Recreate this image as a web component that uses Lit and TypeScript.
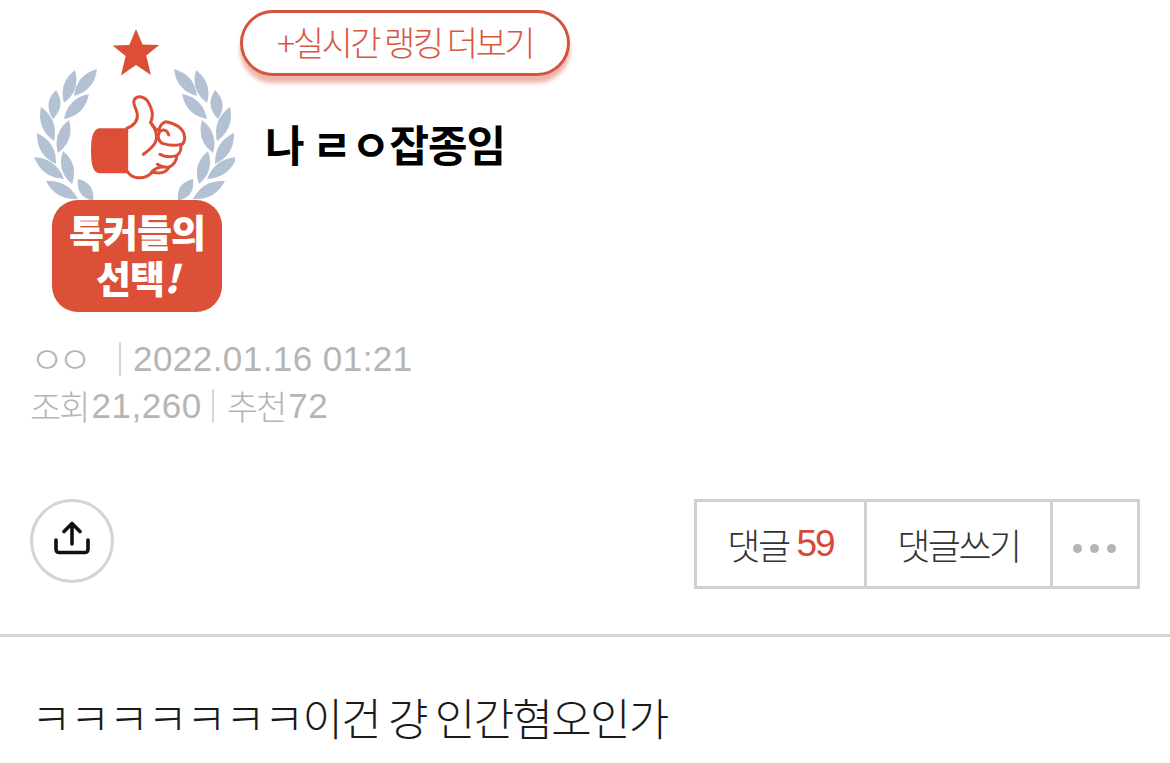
import { LitElement, html, css } from "lit";
import { customElement } from "lit/decorators.js";

const leaves: number[][] = [
  [97, 69, 74, 96], [75, 70, 64, 103], [89, 94, 64, 119], [56, 90, 53, 119], [41, 107, 54, 141],
  [69, 120, 58, 153], [37, 133, 56, 164], [63, 151, 72, 184], [34, 157, 64, 179], [46, 181, 78, 199], [78, 179, 93, 201],
];

function leaf(x1: number, y1: number, x2: number, y2: number, w = 12) {
  const dx = x2 - x1, dy = y2 - y1, l = Math.hypot(dx, dy);
  const nx = -dy / l * w, ny = dx / l * w;
  const mx = (x1 + x2) / 2, my = (y1 + y2) / 2;
  return `M${x1} ${y1}Q${mx + nx} ${my + ny} ${x2} ${y2}Q${mx - nx} ${my - ny} ${x1} ${y1}Z`;
}
const leafPath = leaves.map((p) => leaf(p[0], p[1], p[2], p[3]) + leaf(271 - p[0], p[1], 271 - p[2], p[3])).join("");

@customElement("app-root")
export class AppRoot extends LitElement {
  static styles = css`
    :host { display: block; width: 1170px; height: 763px; overflow: hidden; background: #fff;
      font-family: "Liberation Sans", "Noto Sans CJK KR", sans-serif; }
    .top { display: flex; padding: 10px 30px 0; height: 310px; box-sizing: border-box; }
    .badge { width: 205px; height: 295px; margin-top: 10px; flex: none; display: block; }
    .badge text { font-family: "Noto Sans CJK KR", sans-serif; font-weight: 900; fill: #fff; text-anchor: middle; }
    .head { margin-left: 5px; display: flex; flex-direction: column; align-items: flex-start; }
    .rank { box-sizing: border-box; width: 330px; height: 66px; border: 3px solid #d4553e; border-radius: 33px;
      box-shadow: 0 7px 4px 0 #efb5aa; display: flex; align-items: center; justify-content: center;
      color: #d8573f; font: 300 34px "Noto Sans CJK KR", sans-serif; letter-spacing: -2.5px; background: #fff; padding-bottom: 4px; }
    h1 { margin: 42px 0 0 25px; font: 700 43px/50px "Noto Sans CJK KR", sans-serif; color: #000; letter-spacing: -1px; white-space: pre; }
    .meta { padding: 25px 0 0 30px; color: #b5b5b5; font-size: 35px; line-height: 47px; }
    .line { display: flex; align-items: center; height: 47px; white-space: pre; }
    .ko { font-family: "Noto Sans CJK KR", sans-serif; letter-spacing: -2px; font-weight: 300; font-size: 34px; }
    .nick { width: 58px; letter-spacing: -6px; font-size: 37px; }
    .bar { width: 2px; height: 34px; background: #d8d8d8; flex: none; }
    .bar.a { margin: 0 12px 0 31px; }
    .bar.b { margin: 0 13px 0 10px; }
    .num { letter-spacing: 0.45px; }
    .num2 { letter-spacing: 0.5px; margin-left: 3px; }
    .actions { display: flex; justify-content: space-between; align-items: flex-start; padding: 0 30px; margin-top: 70px; height: 138px; box-sizing: border-box; border-bottom: 3px solid #d5d5d5; }
    .share { box-sizing: border-box; width: 84px; height: 84px; border: 3px solid #d4d4d4; border-radius: 50%; display: flex; align-items: center; justify-content: center; }
    .share svg { display: block; }
    .group { display: flex; height: 90px; box-sizing: border-box; border: 3px solid #d0d0d0; color: #333; font: 300 36px "Noto Sans CJK KR", sans-serif; letter-spacing: -2.5px; }
    .cell { display: flex; align-items: center; justify-content: center; box-sizing: border-box; border-right: 3px solid #d0d0d0; }
    .c1 { width: 170px; }
    .c2 { width: 186px; }
    .c3 { width: 84px; border-right: 0; gap: 8px; padding-top: 9px; padding-right: 2px; }
    .red { color: #d4493c; margin-left: 8px; font-family: "Liberation Sans", sans-serif; letter-spacing: -2px; font-size: 37px; }
    .dot { width: 9px; height: 9px; background: #b5b5b5; border-radius: 50%; }
    p { margin: 0; padding: 50px 0 0 31px; font: 300 44px/60px "Noto Sans CJK KR", sans-serif; color: #1a1a1a; letter-spacing: -1.7px; white-space: pre; }
  `;

  render() {
    return html`
      <div class="top">
        <svg class="badge" viewBox="30 20 205 295" aria-hidden="true">
          <path d="${leafPath}" fill="#b3c2d3"></path>
          <path d="M136 29l6.6 15.5 16.7.6-13 10.4 4.6 19.5L136 65l-15 10.5 4.6-19.5-13-10.4 16.7-.6z" fill="#dc4f36"></path>
          <g transform="translate(80 85) scale(.3333)">
            <path d="M62 130h82v135H62c-18 0-29-14-29-67s11-68 29-68z" fill="#dc4f36"></path>
            <path d="M140 130C160 122 174 108 172 88C170 70 156 56 163 44C172 30 195 34 205 52C218 74 222 92 212 112C218 124 226 132 236 136C240 122 246 112 258 110C284 114 312 130 314 156C315 168 310 176 302 182C305 194 298 206 290 212C292 226 280 240 268 246C262 256 250 264 236 264L216 262C206 274 190 280 172 278C156 276 146 268 140 256Z" fill="#fff" stroke="#dc4f36" stroke-width="9" stroke-linejoin="round"></path>
            <path d="M212 112C226 130 236 150 226 172C218 188 204 198 190 208M266 150C262 134 246 130 238 142C232 154 234 170 250 176C268 182 288 182 302 178M240 208C256 216 276 216 290 212M232 238C244 246 256 248 268 246M216 260C226 250 238 246 250 246" fill="none" stroke="#dc4f36" stroke-width="9" stroke-linecap="round"></path>
          </g>
          <rect x="52" y="200" width="170" height="112" rx="26" fill="#dc5037"></rect>
          <text x="137" y="247" font-size="38" letter-spacing="-1">톡커들의</text>
          <text x="137" y="293" font-size="38" letter-spacing="-1">선택<tspan font-style="italic">!</tspan></text>
        </svg>
        <div class="head">
          <div class="rank">+실시간 랭킹 더보기</div>
          <h1>나 ㄹㅇ잡종임</h1>
        </div>
      </div>
      <div class="meta">
        <div class="line"><span class="ko nick">ㅇㅇ</span><span class="bar a"></span><span class="num">2022.01.16 01:21</span></div>
        <div class="line"><span class="ko">조회</span><span class="num2">21,260</span><span class="bar b"></span><span class="ko">추천</span><span class="num2">72</span></div>
      </div>
      <div class="actions">
        <div class="share">
          <svg width="40" height="40" viewBox="0 0 40 40" fill="none" stroke="#111" stroke-width="3.6" stroke-linecap="round" stroke-linejoin="round">
            <path d="M4 19v9.5a3 3 0 0 0 3 3h26a3 3 0 0 0 3-3V19"></path>
            <path d="M20 23V3M12 10.5l8-8 8 8"></path>
          </svg>
        </div>
        <div class="group">
          <div class="cell c1">댓글<span class="red">59</span></div>
          <div class="cell c2">댓글쓰기</div>
          <div class="cell c3"><span class="dot"></span><span class="dot"></span><span class="dot"></span></div>
        </div>
      </div>
      <p>ㅋㅋㅋㅋㅋㅋㅋ이건 걍 인간혐오인가</p>
    `;
  }
}
